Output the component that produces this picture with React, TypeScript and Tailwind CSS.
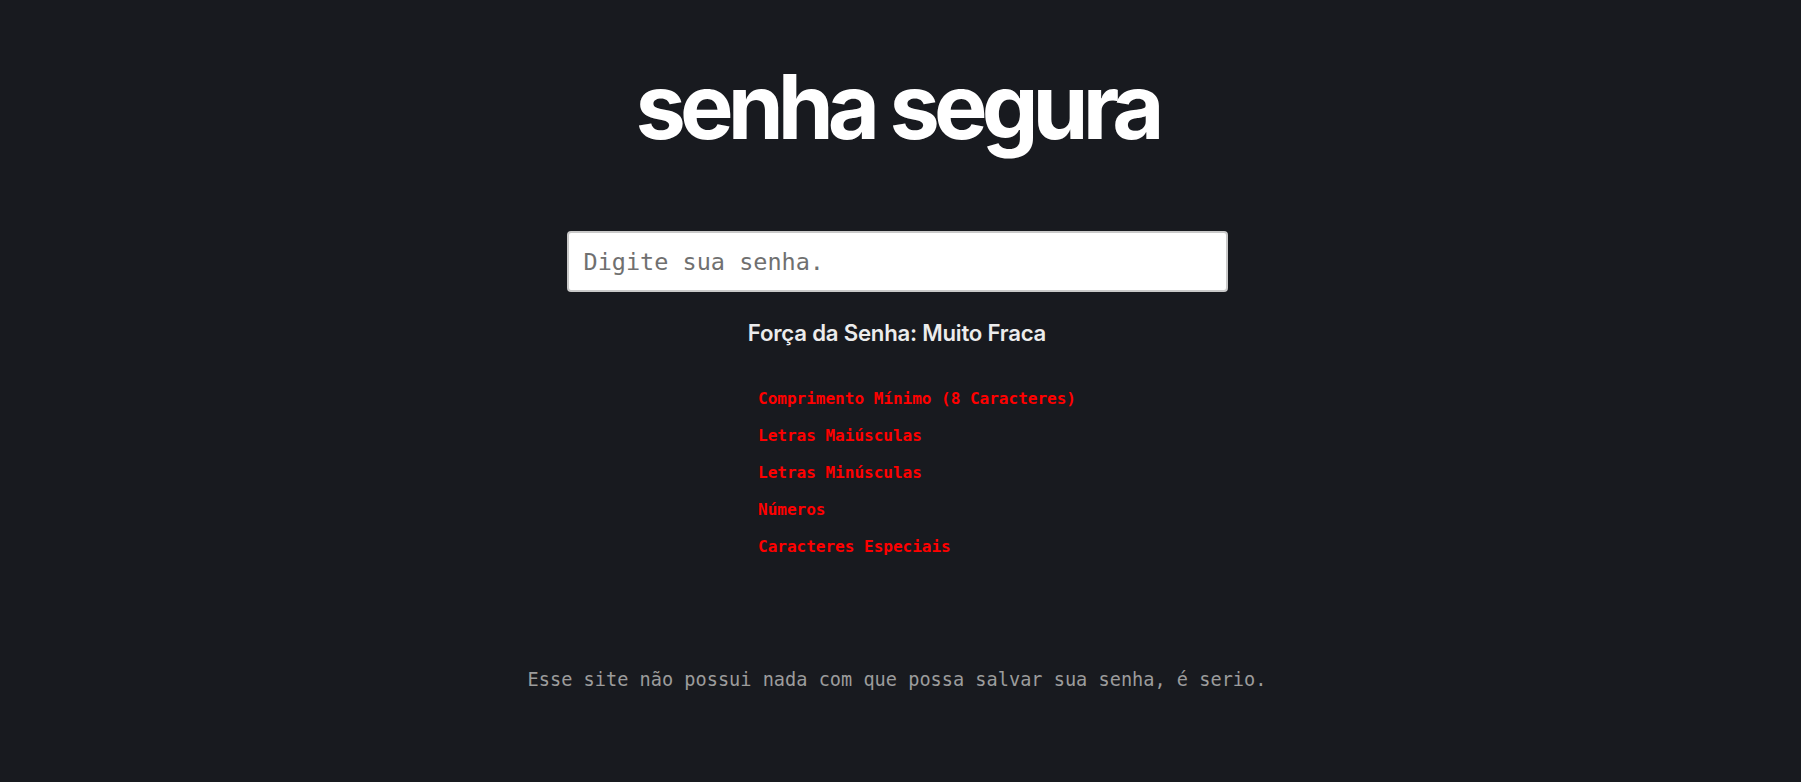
import React from "react";

const mono = "font-['DejaVu_Sans_Mono','Liberation_Mono',monospace]";

export default function App() {
  const reqs = [
    "Comprimento Mínimo (8 Caracteres)",
    "Letras Maiúsculas",
    "Letras Minúsculas",
    "Números",
    "Caracteres Especiais",
  ];
  return (
    <div className="min-h-screen w-full bg-[#181a1f] flex flex-col items-center pr-[7px]">
      <h1 className="mt-[62px] text-[90px] leading-none font-bold tracking-[-0.066em] text-white font-['Inter',sans-serif]">
        senha segura
      </h1>
      <input
        type="text"
        placeholder="Digite sua senha."
        className={`mt-[79px] w-[661px] h-[61px] rounded-[4px] border-2 border-[#c9c9c9] bg-white px-[15px] text-[23.5px] text-[#333] placeholder:text-[#707070] outline-none ${mono}`}
      />
      <p className="mt-[27px] text-[22.2px] leading-[28px] font-semibold tracking-[-0.01em] text-[#ececec] font-['Inter',sans-serif]">
        Força da Senha: Muito Fraca
      </p>
      <ul className={`mt-[33px] pl-10 list-none ${mono}`}>
        {reqs.map((r) => (
          <li key={r} className="text-[16px] leading-[37px] font-bold text-[#ff0000]">
            {r}
          </li>
        ))}
      </ul>
      <p className={`mt-[101px] text-[18.6px] leading-[28px] text-[#9c9c9c] ${mono}`}>
        Esse site não possui nada com que possa salvar sua senha, é serio.
      </p>
    </div>
  );
}
